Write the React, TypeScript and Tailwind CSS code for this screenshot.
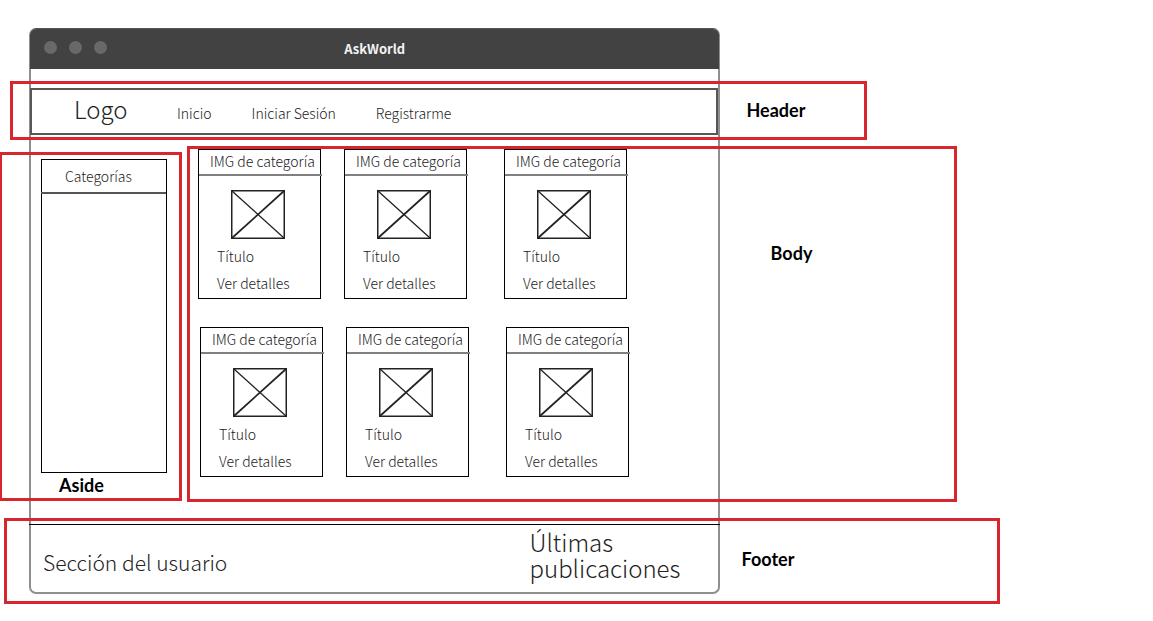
import type { ReactNode } from "react";

const SKETCH_FONT = "font-['Noto_Sans_CJK_SC','Noto_Sans',sans-serif]";

const cardRows = [
  { id: "top", indent: "pl-2.5" },
  { id: "bottom", indent: "pl-3" },
];
const cardColumns = ["left", "center", "right"];

function Annotation({ label, className }: { label: ReactNode; className: string }) {
  return (
    <div
      className={`pointer-events-none absolute flex border-[3px] border-[#d8262e] font-[Lato,sans-serif] text-lg leading-6 font-bold text-black ${className}`}
    >
      <span>{label}</span>
    </div>
  );
}

function ImagePlaceholder() {
  return (
    <svg
      role="img"
      aria-label="Imagen"
      viewBox="0 0 54 49"
      className="mt-3.5 ml-8 h-[49px] w-[54px]"
      fill="none"
      stroke="#222"
    >
      <rect x="0.75" y="0.75" width="52.5" height="47.5" strokeWidth="1.5" />
      <path d="M1 1 53 48" strokeWidth="1.3" />
      <path d="M1 48 53 1" strokeWidth="1.7" />
    </svg>
  );
}

function CategoryCard() {
  return (
    <article className="h-[150px] w-[123px] border border-black text-sm leading-5 font-light">
      <h2 className="-mr-0.5 h-[26px] border-b-2 border-[#808080] pt-px pl-[11px] whitespace-nowrap">
        IMG de categoría
      </h2>
      <ImagePlaceholder />
      <p className="mt-[7px] pl-[18px]">Título</p>
      <a href="#detalles" className="mt-[7px] block pl-[18px]">
        Ver detalles
      </a>
    </article>
  );
}

export default function App() {
  return (
    <div className={`min-h-screen overflow-hidden bg-white pt-7 pl-[29px] ${SKETCH_FONT}`}>
      <div className="flex w-[calc(61.6%-1px)] min-w-[691px] flex-col rounded-[7px] border-2 border-t border-[#8f8f8f] border-t-[#555] text-[#222]">
        <div className="-mx-px grid h-10 grid-cols-[1fr_auto_1fr] items-center rounded-t-md bg-[#424242]">
          <div className="flex gap-3 pb-1 pl-3.5">
            <span className="size-[13px] rounded-full bg-[#696969]" />
            <span className="size-[13px] rounded-full bg-[#696969]" />
            <span className="size-[13px] rounded-full bg-[#696969]" />
          </div>
          <h1 className="text-[13px] leading-5 font-bold text-[#f2f2f2]">AskWorld</h1>
        </div>

        <header className="relative mt-[19px]">
          <nav className="-ml-px flex h-[47px] items-center border-2 border-[#555855] font-light">
            <a href="#logo" className="ml-[42px] w-[103px] pb-1.5 text-2xl leading-8">
              Logo
            </a>
            <div className="flex gap-10 pt-0.5 text-sm leading-5">
              <a href="#inicio">Inicio</a>
              <a href="#sesion">Iniciar Sesión</a>
              <a href="#registro">Registrarme</a>
            </div>
          </nav>
          <Annotation
            label="Header"
            className="-top-[7px] -right-[149px] -bottom-[5px] -left-[21px] items-center justify-end pr-[59px] pb-0.5"
          />
        </header>

        <div className="mt-3 flex">
          <aside className="relative w-[157px] shrink-0 pt-3">
            <div className="ml-2.5 h-[314px] w-[126px] border border-black">
              <h2 className="-ml-px h-[34px] border-b-2 border-[#555] pt-1.5 pl-6 text-sm leading-5 font-light">
                Categorías
              </h2>
            </div>
            <Annotation
              label="Aside"
              className="top-[5px] right-[6px] -bottom-[1px] -left-8 items-end pb-px pl-[57px]"
            />
          </aside>
          <main className="relative grow pt-0.5 pb-[23px]">
            <div className="flex flex-col gap-7">
              {cardRows.map((row) => (
                <div key={row.id} className={`grid grid-cols-[146px_160px_123px] ${row.indent}`}>
                  {cardColumns.map((column) => (
                    <CategoryCard key={column} />
                  ))}
                </div>
              ))}
            </div>
            <Annotation
              label="Body"
              className="-top-px -right-[239px] -bottom-[2px] -left-px justify-end pt-[92px] pr-[142px]"
            />
          </main>
        </div>

        <footer className="relative -mx-0.5 mt-6 flex h-[68px] items-start justify-between border-t border-black pr-10 pl-3.5 font-light">
          <p className="pt-[21px] text-[21px] leading-8">Sección del usuario</p>
          <p className="pt-1 text-2xl leading-[26px]">
            Últimas
            <br />
            publicaciones
          </p>
          <Annotation
            label="Footer"
            className="-top-[7px] -right-[280px] -bottom-3 -left-[25px] items-center justify-end pr-[203px] pb-1"
          />
        </footer>
      </div>
    </div>
  );
}
